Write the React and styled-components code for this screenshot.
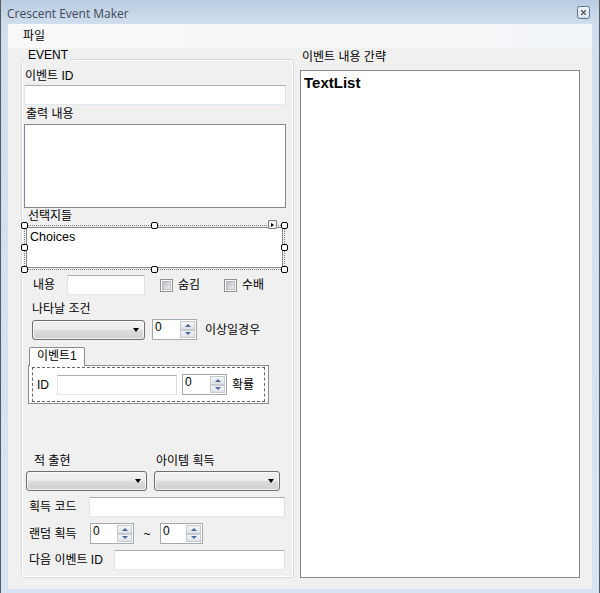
import React from 'react'
import styled, { createGlobalStyle } from 'styled-components'

const GlobalStyle = createGlobalStyle`
  html, body {
    margin: 0;
    padding: 0;
    background: #ffffff;
  }
  body {
    font-family: "Liberation Sans", "Noto Sans CJK KR", sans-serif;
    font-size: 12px;
    color: #000;
  }
`

const Window = styled.div`
  width: 600px;
  height: 593px;
  box-sizing: border-box;
  border-left: 1px solid #555a61;
  border-right: 1px solid #555a61;
  background: linear-gradient(#b9cce1, #d1deed 24px, #d8e4f2);
  display: flex;
  flex-direction: column;
  overflow: hidden;
`

const TitleBar = styled.div`
  height: 24px;
  flex: none;
  display: flex;
  align-items: center;
  justify-content: space-between;
  padding: 0 9px 0 6px;
`

const Title = styled.span`
  font-family: "Open Sans", "Noto Sans", sans-serif;
  font-size: 12px;
  color: #3e4857;
  padding-top: 2px;
`

const Client = styled.div`
  flex: 1;
  margin: 0 7px 4px 7px;
  display: flex;
  flex-direction: column;
  background: #f0f0f0;
`

const MenuBar = styled.div`
  height: 24px;
  flex: none;
  display: flex;
  align-items: center;
  padding-left: 15px;
  background: linear-gradient(to right, #fafafa, #f6f6f6 70%, #f1f5fa);
`

const MenuItem = styled.span`
  line-height: 14px;
`

const Content = styled.div`
  flex: 1;
  display: flex;
  padding-left: 13px;
`

const GroupBox = styled.div`
  position: relative;
  margin-top: 11px;
  width: 273px;
  height: 519px;
  box-sizing: border-box;
  border: 1px solid #d5dfe5;
  border-radius: 3px;
  box-shadow: inset 0 0 0 1px #ffffff;
  display: flex;
  flex-direction: column;
`

const GroupLegend = styled.span`
  position: absolute;
  top: -12px;
  left: 4px;
  padding: 0 2px;
  line-height: 14px;
  background: #f0f0f0;
`

const Caption = styled.div`
  line-height: 14px;
  height: 14px;
  white-space: nowrap;
  margin-top: ${(p) => p.$top || 0}px;
  margin-left: ${(p) => p.$left || 0}px;
  width: ${(p) => (p.$width ? `${p.$width}px` : 'auto')};
  flex: none;
`

const TextBox = styled.div`
  box-sizing: border-box;
  height: ${(p) => p.$height || 20}px;
  width: ${(p) => p.$width}px;
  margin-top: ${(p) => p.$top || 0}px;
  margin-left: ${(p) => p.$left || 0}px;
  flex: none;
  background: #ffffff;
  border: 1px solid;
  border-color: #abadb3 #dbdfe6 #e3e9ef #e2e3ea;
`

const ListBox = styled.div`
  box-sizing: border-box;
  height: ${(p) => p.$height}px;
  width: ${(p) => p.$width}px;
  margin-top: ${(p) => p.$top || 0}px;
  margin-left: ${(p) => p.$left || 0}px;
  flex: none;
  background: #ffffff;
  border: 1px solid #828790;
  padding: ${(p) => p.$pad || '0'};
`

const Row = styled.div`
  display: flex;
  align-items: center;
  height: ${(p) => p.$height || 20}px;
  margin-top: ${(p) => p.$top || 0}px;
  margin-left: ${(p) => p.$left || 0}px;
  flex: none;
`

const Selection = styled.div`
  position: relative;
  box-sizing: border-box;
  width: 261px;
  height: 45px;
  margin-top: 2px;
  margin-left: 2px;
  padding: 1px;
  border: 1px dotted #7a7a7a;
  flex: none;
`

const ChoicesText = styled.div`
  box-sizing: border-box;
  height: 100%;
  background: #ffffff;
  border: 1px solid #828790;
  padding: 2px 3px;
  line-height: 14px;
  font-size: 12.5px;
`

const Handle = styled.span`
  position: absolute;
  left: ${(p) => p.$x}px;
  top: ${(p) => p.$y}px;
  width: 7px;
  height: 7px;
  box-sizing: border-box;
  background: #ffffff;
  border: 1px solid #000000;
  border-radius: 2px;
`

const SmartTag = styled.span`
  position: absolute;
  left: 243px;
  top: -6px;
  width: 9px;
  height: 9px;
  box-sizing: border-box;
  border: 1px solid #7f7f7f;
  border-radius: 1px;
  background: #f4f4f4;
  display: flex;
  align-items: center;
  justify-content: center;

  &::after {
    content: '';
    border-left: 3px solid #000;
    border-top: 2.5px solid transparent;
    border-bottom: 2.5px solid transparent;
  }
`

const Check = styled.span`
  width: 13px;
  height: 13px;
  box-sizing: border-box;
  flex: none;
  margin-left: ${(p) => p.$left || 0}px;
  border: 1px solid #8e8f8f;
  background: #ffffff;
  padding: 1px;
  display: flex;

  &::after {
    content: '';
    flex: 1;
    border: 1px solid #b7bbc1;
    background: linear-gradient(135deg, #b9bec4, #eeeff0);
  }
`

const Combo = styled.div`
  box-sizing: border-box;
  width: ${(p) => p.$width}px;
  height: 20px;
  margin-left: ${(p) => p.$left || 0}px;
  flex: none;
  border: 1px solid #707070;
  border-radius: 3px;
  box-shadow: inset 0 0 0 1px rgba(255, 255, 255, 0.7);
  background: linear-gradient(#f2f2f2 0%, #ebebeb 50%, #dddddd 50%, #cfcfcf 100%);
  display: flex;
  align-items: center;
  justify-content: flex-end;
  padding-right: 5px;

  &::after {
    content: '';
    border-top: 4px solid #000;
    border-left: 3.5px solid transparent;
    border-right: 3.5px solid transparent;
  }
`

const Spin = styled.div`
  box-sizing: border-box;
  width: ${(p) => p.$width || 45}px;
  height: 21px;
  margin-left: ${(p) => p.$left || 0}px;
  flex: none;
  border: 1px solid #a4a9b0;
  background: #ffffff;
  display: flex;
`

const SpinValue = styled.span`
  flex: 1;
  padding: 1px 2px;
  line-height: 13px;
`

const SpinButtons = styled.div`
  width: 15px;
  margin: 1px 1px 1px 0;
  display: flex;
  flex-direction: column;
`

const SpinButton = styled.span`
  flex: 1;
  box-sizing: border-box;
  border: 1px solid #c5cbd3;
  background: linear-gradient(#f6f6f6, #dfe2e6);
  display: flex;
  align-items: center;
  justify-content: center;

  &::after {
    content: '';
    border-left: 3px solid transparent;
    border-right: 3px solid transparent;
    ${(p) =>
      p.$down
        ? 'border-top: 3px solid #4a67a0;'
        : 'border-bottom: 3px solid #4a67a0;'}
  }
`

const TabArea = styled.div`
  margin-top: 7px;
  margin-left: 6px;
  width: 241px;
  display: flex;
  flex-direction: column;
  flex: none;
`

const TabHeader = styled.div`
  position: relative;
  z-index: 1;
  align-self: flex-start;
  margin-left: 1px;
  margin-bottom: -1px;
  height: 19px;
  box-sizing: border-box;
  padding: 0 7px;
  line-height: 17px;
  background: #ffffff;
  border: 1px solid #898c95;
  border-bottom: none;
  border-radius: 2px 2px 0 0;
`

const TabPage = styled.div`
  box-sizing: border-box;
  height: 39px;
  border: 1px solid #898c95;
  background: #ffffff;
  padding: 1px 2px 1px 3px;
`

const DesignPanel = styled.div`
  box-sizing: border-box;
  width: 233px;
  height: 35px;
  border: 1px dashed #666666;
  display: flex;
  align-items: center;
  padding-left: 4px;
`

const Tilde = styled.span`
  width: 26px;
  text-align: center;
  flex: none;
`

const RightColumn = styled.div`
  margin-left: 6px;
  width: 280px;
  display: flex;
  flex-direction: column;
`

const Summary = styled.div`
  font-weight: bold;
  font-size: 15px;
  line-height: 17px;
`

const CloseIcon = () => (
  <svg width="13" height="13" viewBox="0 0 13 13">
    <defs>
      <linearGradient id="cb" x1="0" y1="0" x2="0" y2="1">
        <stop offset="0" stopColor="#eef3f9" />
        <stop offset="1" stopColor="#cdd9e8" />
      </linearGradient>
    </defs>
    <rect x="0.5" y="0.5" width="12" height="12" rx="2" fill="url(#cb)" stroke="#627592" />
    <path d="M4 4 L9 9 M9 4 L4 9" stroke="#ffffff" strokeWidth="3" strokeLinecap="square" />
    <path d="M4 4 L9 9 M9 4 L4 9" stroke="#4a5466" strokeWidth="1.4" />
  </svg>
)

const Spinner = ({ width, left }) => (
  <Spin $width={width} $left={left}>
    <SpinValue>0</SpinValue>
    <SpinButtons>
      <SpinButton />
      <SpinButton $down />
    </SpinButtons>
  </Spin>
)

const handles = [
  [-4, -4],
  [126, -4],
  [256, -4],
  [-4, 18],
  [256, 18],
  [-4, 40],
  [126, 40],
  [256, 40],
]

const App = () => {
  return (
    <>
      <GlobalStyle />
      <Window>
        <TitleBar>
          <Title>Crescent Event Maker</Title>
          <CloseIcon />
        </TitleBar>
        <Client>
          <MenuBar>
            <MenuItem>파일</MenuItem>
          </MenuBar>
          <Content>
            <GroupBox>
              <GroupLegend>EVENT</GroupLegend>
              <Caption $top={9} $left={3}>이벤트 ID</Caption>
              <TextBox $width={262} $top={2} $left={2} />
              <Caption $top={2} $left={4}>출력 내용</Caption>
              <ListBox $width={262} $height={84} $top={3} $left={2} />
              <Caption $top={1} $left={6}>선택지들</Caption>
              <Selection>
                <ChoicesText>Choices</ChoicesText>
                {handles.map(([x, y]) => (
                  <Handle key={`${x}-${y}`} $x={x} $y={y} />
                ))}
                <SmartTag />
              </Selection>
              <Row $top={5} $left={11}>
                <Caption $width={34}>내용</Caption>
                <TextBox $width={78} />
                <Check $left={15} />
                <Caption $left={5} $width={46}>숨김</Caption>
                <Check />
                <Caption $left={5}>수배</Caption>
              </Row>
              <Caption $top={7} $left={10}>나타날 조건</Caption>
              <Row $top={3} $left={10} $height={21}>
                <Combo $width={113} />
                <Spinner left={7} />
                <Caption $left={8}>이상일경우</Caption>
              </Row>
              <TabArea>
                <TabHeader>이벤트1</TabHeader>
                <TabPage>
                  <DesignPanel>
                    <Caption $width={20}>ID</Caption>
                    <TextBox $width={120} />
                    <Spinner left={5} />
                    <Caption $left={5}>확률</Caption>
                  </DesignPanel>
                </TabPage>
              </TabArea>
              <Row $top={50} $left={12} $height={14}>
                <Caption $width={122}>적 출현</Caption>
                <Caption>아이템 획득</Caption>
              </Row>
              <Row $top={3} $left={4}>
                <Combo $width={121} />
                <Combo $width={126} $left={7} />
              </Row>
              <Row $top={6} $left={7}>
                <Caption $width={60}>획득 코드</Caption>
                <TextBox $width={196} />
              </Row>
              <Row $top={6} $left={7} $height={21}>
                <Caption $width={61}>랜덤 획득</Caption>
                <Spinner width={44} />
                <Tilde>~</Tilde>
                <Spinner width={43} />
              </Row>
              <Row $top={6} $left={7}>
                <Caption $width={85}>다음 이벤트 ID</Caption>
                <TextBox $width={171} />
              </Row>
            </GroupBox>
            <RightColumn>
              <Caption $top={2} $left={2}>이벤트 내용 간략</Caption>
              <ListBox $width={280} $height={508} $top={6} $pad="3px 3px">
                <Summary>TextList</Summary>
              </ListBox>
            </RightColumn>
          </Content>
        </Client>
      </Window>
    </>
  )
}

export default App
